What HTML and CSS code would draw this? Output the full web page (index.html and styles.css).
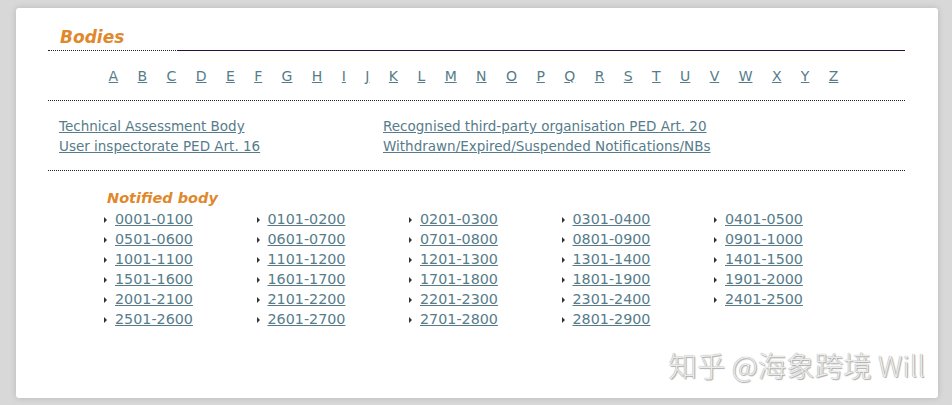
FILE: index.html
```html
<!DOCTYPE html>
<html lang="en">
<head>
    <meta charset="UTF-8">
    <meta name="viewport" content="width=device-width, initial-scale=1.0">
    <title>Bodies</title>
    <link rel="stylesheet" href="styles.css">
</head>
<body>

    <div class="card">
        <div class="heading">
            <h2>Bodies</h2>
            <div class="heading-rule"></div>
        </div>

        <div class="letters">
            <a href="#">A</a><a href="#">B</a><a href="#">C</a><a href="#">D</a><a href="#">E</a>
            <a href="#">F</a><a href="#">G</a><a href="#">H</a><a href="#">I</a><a href="#">J</a>
            <a href="#">K</a><a href="#">L</a><a href="#">M</a><a href="#">N</a><a href="#">O</a>
            <a href="#">P</a><a href="#">Q</a><a href="#">R</a><a href="#">S</a><a href="#">T</a>
            <a href="#">U</a><a href="#">V</a><a href="#">W</a><a href="#">X</a><a href="#">Y</a>
            <a href="#">Z</a>
        </div>

        <div class="types">
            <a href="#">Technical Assessment Body</a>
            <a href="#">Recognised third-party organisation PED Art. 20</a>
            <a href="#">User inspectorate PED Art. 16</a>
            <a href="#">Withdrawn/Expired/Suspended Notifications/NBs</a>
        </div>

        <div class="notified">
            <h3>Notified body</h3>
            <ul class="ranges">
                <li><a href="#">0001-0100</a></li>
                <li><a href="#">0101-0200</a></li>
                <li><a href="#">0201-0300</a></li>
                <li><a href="#">0301-0400</a></li>
                <li><a href="#">0401-0500</a></li>
                <li><a href="#">0501-0600</a></li>
                <li><a href="#">0601-0700</a></li>
                <li><a href="#">0701-0800</a></li>
                <li><a href="#">0801-0900</a></li>
                <li><a href="#">0901-1000</a></li>
                <li><a href="#">1001-1100</a></li>
                <li><a href="#">1101-1200</a></li>
                <li><a href="#">1201-1300</a></li>
                <li><a href="#">1301-1400</a></li>
                <li><a href="#">1401-1500</a></li>
                <li><a href="#">1501-1600</a></li>
                <li><a href="#">1601-1700</a></li>
                <li><a href="#">1701-1800</a></li>
                <li><a href="#">1801-1900</a></li>
                <li><a href="#">1901-2000</a></li>
                <li><a href="#">2001-2100</a></li>
                <li><a href="#">2101-2200</a></li>
                <li><a href="#">2201-2300</a></li>
                <li><a href="#">2301-2400</a></li>
                <li><a href="#">2401-2500</a></li>
                <li><a href="#">2501-2600</a></li>
                <li><a href="#">2601-2700</a></li>
                <li><a href="#">2701-2800</a></li>
                <li><a href="#">2801-2900</a></li>
            </ul>
        </div>

        <div class="watermark">知乎 @海象跨境 Will</div>
    </div>

</body>
</html>
```

FILE: styles.css
```css
body {
    margin: 0;
    padding: 8px 14px 7px 16px;
    background-color: #d8d8d8;
    font-family: "DejaVu Sans", Verdana, sans-serif;
    font-size: 13.5px;
}
a {
    color: #567c8a;
}
.card {
    position: relative;
    height: 390px;
    box-sizing: border-box;
    padding: 18px 33px 0 32px;
    background-color: #fff;
    border-radius: 3px;
    box-shadow: 0 0 6px rgba(0, 0, 0, 0.15);
}
.heading {
    display: flex;
    align-items: flex-end;
}
.heading h2 {
    margin: 0;
    width: 118px;
    padding-left: 12px;
    border-bottom: 1px dotted #222;
    font-size: 17px;
    line-height: 22px;
    font-style: italic;
    font-weight: bold;
    color: #e0882c;
    padding-bottom: 2px;
}
.heading-rule {
    flex: 1;
    border-bottom: 1px solid #2b1045;
}
.letters {
    display: flex;
    justify-content: center;
    gap: 19.4px;
    padding: 15px 6px 14px 0;
    font-size: 14px;
    line-height: 20px;
    border-bottom: 1px dotted #222;
}
.types {
    display: grid;
    grid-template-columns: 324px 1fr;
    padding: 15px 0 14px 11px;
    line-height: 20px;
    border-bottom: 1px dotted #222;
}
.notified {
    padding: 18px 0 0 56px;
}
.notified h3 {
    margin: 0 0 2px 3px;
    font-size: 14.5px;
    line-height: 18px;
    font-style: italic;
    font-weight: bold;
    color: #e0882c;
}
.ranges {
    display: grid;
    grid-template-columns: repeat(5, 152.5px);
    margin: 0;
    padding: 0;
    list-style: none;
    font-size: 14.3px;
    line-height: 20px;
}
.ranges li {
    display: flex;
    align-items: center;
}
.ranges li::before {
    content: "";
    width: 0;
    height: 0;
    margin: 2px 8px 0 0;
    border-top: 3px solid transparent;
    border-bottom: 3px solid transparent;
    border-left: 3px solid #333;
}
.watermark {
    position: absolute;
    right: 13px;
    bottom: 13px;
    font-family: "Noto Sans CJK SC", sans-serif;
    font-size: 28.5px;
    font-weight: 300;
    color: #ececec;
    text-shadow: 0 0 1px #8a8a8a, 1px 1px 1px #b0b0b0;
}
```
